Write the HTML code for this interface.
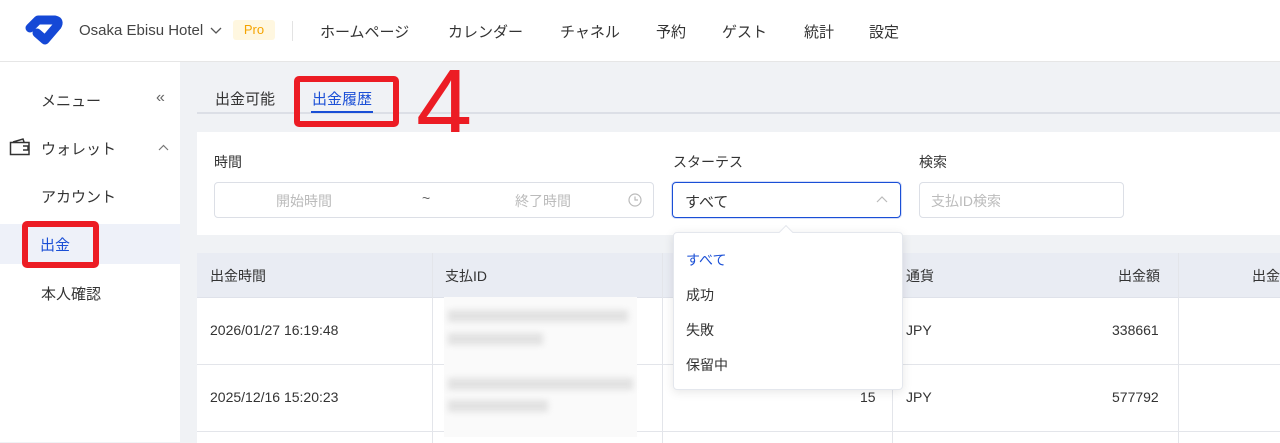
<!DOCTYPE html><html><head><meta charset="utf-8"><style>
*{margin:0;padding:0;box-sizing:border-box}
body{width:1280px;height:442px;overflow:hidden;background:#f0f2f5;font-family:"Liberation Sans","Noto Sans CJK JP",sans-serif;color:#333;font-size:14px;position:relative}
.a{position:absolute}
.hdr{left:0;top:0;width:1280px;height:62px;background:#fff;border-bottom:1px solid #e6e6e6}
.side{left:0;top:62px;width:180px;height:380px;background:#fff}
.nav{top:21px;font-size:15px;color:#333}
.t{white-space:nowrap}
.cell{position:absolute;white-space:nowrap}
</style></head><body>
<div class="a hdr">
<svg class="a" style="left:0;top:0" width="70" height="55" viewBox="0 0 70 55"><path d="M30 28 L38 20 L55 20 Q60 21 57 26 L45 40 L37 33" fill="none" stroke="#1548d6" stroke-width="9" stroke-linejoin="round" stroke-linecap="round"/></svg>
<div class="a t" style="left:79px;top:22px;font-size:15px;color:#444">Osaka Ebisu Hotel</div>
<svg class="a" style="left:210px;top:27px" width="12" height="8"><path d="M1 1 L6 6 L11 1" stroke="#555" fill="none" stroke-width="1.3"/></svg>
<div class="a" style="left:233px;top:20px;width:42px;height:20px;background:#fff7e0;border-radius:3px;color:#f5a300;font-size:13px;text-align:center;line-height:20px">Pro</div>
<div class="a" style="left:292px;top:21px;width:1px;height:20px;background:#e3e3e3"></div>
<div class="a nav t" style="left:320px">ホームページ</div>
<div class="a nav t" style="left:448px">カレンダー</div>
<div class="a nav t" style="left:560px">チャネル</div>
<div class="a nav t" style="left:656px">予約</div>
<div class="a nav t" style="left:722px">ゲスト</div>
<div class="a nav t" style="left:804px">統計</div>
<div class="a nav t" style="left:869px">設定</div>
</div>
<div class="a side">
<div class="a t" style="left:41px;top:28px;font-size:15px">メニュー</div>
<div class="a" style="left:156px;top:27px;font-size:16px;color:#666">«</div>
<svg class="a" style="left:9px;top:76px" width="22" height="18"><path d="M1.5 4.5 H20 V16.5 H1.5 Z M4 4 L14 1 L15 4 M14 8 H19 V12 H14" stroke="#333" fill="none" stroke-width="1.5"/></svg>
<div class="a t" style="left:41px;top:76px;font-size:15px">ウォレット</div>
<svg class="a" style="left:158px;top:82px" width="11" height="7"><path d="M1 6 L5.5 1.5 L10 6" stroke="#777" fill="none" stroke-width="1.2"/></svg>
<div class="a t" style="left:41px;top:124px;font-size:15px">アカウント</div>
<div class="a" style="left:0;top:162px;width:180px;height:40px;background:#eef1f9"></div>
<div class="a" style="left:22px;top:159px;width:77px;height:47px;border:6px solid #ec1c24;border-radius:5px"></div>
<div class="a t" style="left:40px;top:172px;font-size:15px;color:#1a4fd6">出金</div>
<div class="a t" style="left:41px;top:221px;font-size:15px">本人確認</div>
</div>
<div class="a t" style="left:215px;top:88px;font-size:15px">出金可能</div>
<div class="a t" style="left:312px;top:88px;font-size:15px;color:#1a4fd6">出金履歴</div>
<div class="a" style="left:197px;top:112px;width:1083px;height:2px;background:#dcdfe6"></div>
<div class="a" style="left:311px;top:111px;width:62px;height:2px;background:#1a4fd6"></div>
<div class="a" style="left:294px;top:76px;width:105px;height:51px;border:6px solid #ec1c24;border-radius:5px"></div>
<div class="a" style="left:416px;top:56px;font-size:101px;color:#ec1c24;line-height:101px;font-family:'Liberation Sans',sans-serif">4</div>
<div class="a" style="left:197px;top:132px;width:1083px;height:103px;background:#fff"></div>
<div class="a t" style="left:214px;top:152px;font-size:14px">時間</div>
<div class="a" style="left:214px;top:182px;width:440px;height:36px;border:1px solid #dcdfe6;border-radius:4px"></div>
<div class="a t" style="left:276px;top:191px;color:#bbb">開始時間</div>
<div class="a t" style="left:422px;top:190px;color:#666">~</div>
<div class="a t" style="left:515px;top:191px;color:#bbb">終了時間</div>
<svg class="a" style="left:628px;top:193px" width="14" height="14"><circle cx="7" cy="7" r="6" stroke="#bbb" fill="none" stroke-width="1.2"/><path d="M7 3.5 V7 H10" stroke="#bbb" fill="none" stroke-width="1.2"/></svg>
<div class="a t" style="left:673px;top:152px">スターテス</div>
<div class="a" style="left:672px;top:182px;width:229px;height:36px;border:1px solid #1a4fd6;border-radius:4px;box-shadow:0 0 0 1px #d6def8"></div>
<div class="a t" style="left:685px;top:191px;font-size:15px">すべて</div>
<svg class="a" style="left:876px;top:195px" width="12" height="8"><path d="M1 7 L6 2 L11 7" stroke="#bbb" fill="none" stroke-width="1.2"/></svg>
<div class="a t" style="left:919px;top:152px">検索</div>
<div class="a" style="left:919px;top:182px;width:205px;height:36px;border:1px solid #dcdfe6;border-radius:4px"></div>
<div class="a t" style="left:931px;top:191px;color:#bbb">支払ID検索</div>
<div class="a" style="left:197px;top:253px;width:1083px;height:190px;background:#fff"></div>
<div class="a" style="left:197px;top:253px;width:1083px;height:45px;background:#e9ecf3;border-bottom:1px solid #dfe2ea"></div>
<div class="a" style="left:197px;top:364px;width:1083px;height:1px;background:#e3e5ea"></div>
<div class="a" style="left:197px;top:431px;width:1083px;height:1px;background:#e3e5ea"></div>
<div class="a" style="left:432px;top:253px;width:1px;height:190px;background:#e3e5ea"></div>
<div class="a" style="left:662px;top:253px;width:1px;height:190px;background:#e3e5ea"></div>
<div class="a" style="left:892px;top:253px;width:1px;height:190px;background:#e3e5ea"></div>
<div class="a" style="left:1178px;top:253px;width:1px;height:190px;background:#e3e5ea"></div>
<div class="cell" style="left:210px;top:266px">出金時間</div>
<div class="cell" style="left:445px;top:266px">支払ID</div>
<div class="cell" style="left:906px;top:266px">通貨</div>
<div class="cell" style="left:1118px;top:266px">出金額</div>
<div class="cell" style="left:1252px;top:266px">出金</div>
<div class="cell" style="left:210px;top:322px">2026/01/27 16:19:48</div>
<div class="cell" style="left:210px;top:389px">2025/12/16 15:20:23</div>
<div class="a" style="left:444px;top:297px;width:193px;height:140px;background:#fafafa"></div>
<div class="a" style="left:448px;top:310px;width:180px;height:12px;background:#e2e2e2;filter:blur(3px)"></div>
<div class="a" style="left:448px;top:333px;width:95px;height:12px;background:#e2e2e2;filter:blur(3px)"></div>
<div class="a" style="left:448px;top:378px;width:185px;height:12px;background:#e2e2e2;filter:blur(3px)"></div>
<div class="a" style="left:448px;top:400px;width:100px;height:12px;background:#e2e2e2;filter:blur(3px)"></div>
<div class="cell" style="left:906px;top:322px">JPY</div>
<div class="cell" style="left:906px;top:389px">JPY</div>
<div class="cell" style="left:1112px;top:322px">338661</div>
<div class="cell" style="left:1112px;top:389px">577792</div>
<div class="cell" style="left:860px;top:389px">15</div>
<div class="a" style="left:673px;top:232px;width:230px;height:158px;background:#fff;border:1px solid #e4e7ed;border-radius:4px;box-shadow:0 2px 10px rgba(0,0,0,.1)"></div>
<div class="a" style="left:781px;top:227px;width:10px;height:10px;background:#fff;border-left:1px solid #e4e7ed;border-top:1px solid #e4e7ed;transform:rotate(45deg)"></div>
<div class="cell" style="left:686px;top:250px;color:#1a4fd6">すべて</div>
<div class="cell" style="left:686px;top:285px">成功</div>
<div class="cell" style="left:686px;top:320px">失敗</div>
<div class="cell" style="left:686px;top:355px">保留中</div>
</body></html>
